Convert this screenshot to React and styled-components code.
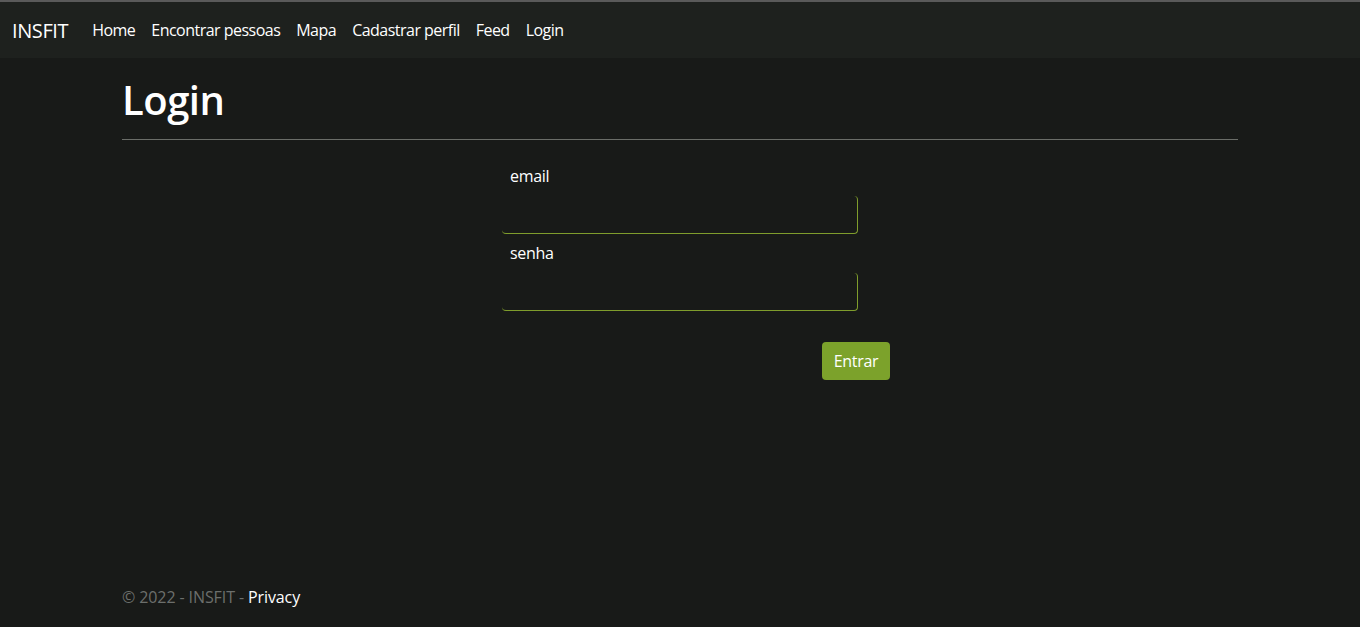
import React from "react";
import styled, { createGlobalStyle } from "styled-components";

const Global = createGlobalStyle`
  html, body { margin: 0; padding: 0; }
  body {
    background: #181a18;
    color: #ffffff;
    font-family: "Open Sans", "Noto Sans", sans-serif;
    font-size: 16px;
  }
  * { box-sizing: border-box; }
`;

const Page = styled.div`
  min-height: 627px;
  display: flex;
  flex-direction: column;
  border-top: 2px solid #5a5a5a;
`;

const Navbar = styled.nav`
  height: 56px;
  background: #1e211e;
  display: flex;
  align-items: center;
  padding: 0 12px;
`;

const Brand = styled.a`
  font-size: 20px;
  color: #ffffff;
  text-decoration: none;
  margin-right: 16px;
  letter-spacing: -0.4px;
`;

const NavList = styled.ul`
  display: flex;
  list-style: none;
  margin: 0;
  padding: 0;
`;

const NavLink = styled.a`
  display: block;
  padding: 8px 8px;
  color: #ffffff;
  text-decoration: none;
  font-size: 16px;
  letter-spacing: -0.52px;
`;

const Main = styled.main`
  flex: 1;
  width: 1116px;
  margin: 0 auto;
  padding-top: 18px;
`;

const Title = styled.h1`
  font-size: 40px;
  font-weight: 600;
  line-height: 48px;
  margin: 0 0 15px;
  letter-spacing: -0.5px;
`;

const Rule = styled.hr`
  border: 0;
  border-top: 1px solid #6a6d68;
  margin: 0 0 24px;
`;

const Form = styled.form`
  width: 388px;
  margin-left: 380px;
  display: flex;
  flex-direction: column;
`;

const Label = styled.label`
  display: block;
  padding-left: 8px;
  line-height: 24px;
  margin-bottom: 8px;
  letter-spacing: -0.3px;
`;

const Input = styled.input`
  width: 356px;
  height: 38px;
  background: transparent;
  border: 0;
  border-right: 1px solid #7f9d2c;
  border-bottom: 1px solid #7f9d2c;
  border-radius: 4px;
  color: #fff;
  outline: none;
  margin-bottom: ${(p) => (p.$last ? "31px" : "7px")};
`;

const Button = styled.button`
  align-self: flex-end;
  width: 68px;
  height: 38px;
  background: #7ca22b;
  color: #ffffff;
  border: 0;
  border-radius: 4px;
  font-family: inherit;
  font-size: 16px;
  letter-spacing: -0.3px;
`;

const Footer = styled.footer`
  height: 60px;
  line-height: 60px;
  width: 1116px;
  margin: 0 auto;
  color: #6c6f6c;
  letter-spacing: -0.1px;
`;

const FooterLink = styled.a`
  color: #ffffff;
  text-decoration: none;
`;

export default function App() {
  const links = ["Home", "Encontrar pessoas", "Mapa", "Cadastrar perfil", "Feed", "Login"];
  return (
    <Page>
      <Global />
      <Navbar>
        <Brand href="#">INSFIT</Brand>
        <NavList>
          {links.map((l) => (
            <li key={l}>
              <NavLink href="#">{l}</NavLink>
            </li>
          ))}
        </NavList>
      </Navbar>
      <Main>
        <Title>Login</Title>
        <Rule />
        <Form onSubmit={(e) => e.preventDefault()}>
          <Label htmlFor="email">email</Label>
          <Input id="email" type="email" />
          <Label htmlFor="senha">senha</Label>
          <Input id="senha" type="password" $last />
          <Button type="submit">Entrar</Button>
        </Form>
      </Main>
      <Footer>
        © 2022 - INSFIT - <FooterLink href="#">Privacy</FooterLink>
      </Footer>
    </Page>
  );
}
